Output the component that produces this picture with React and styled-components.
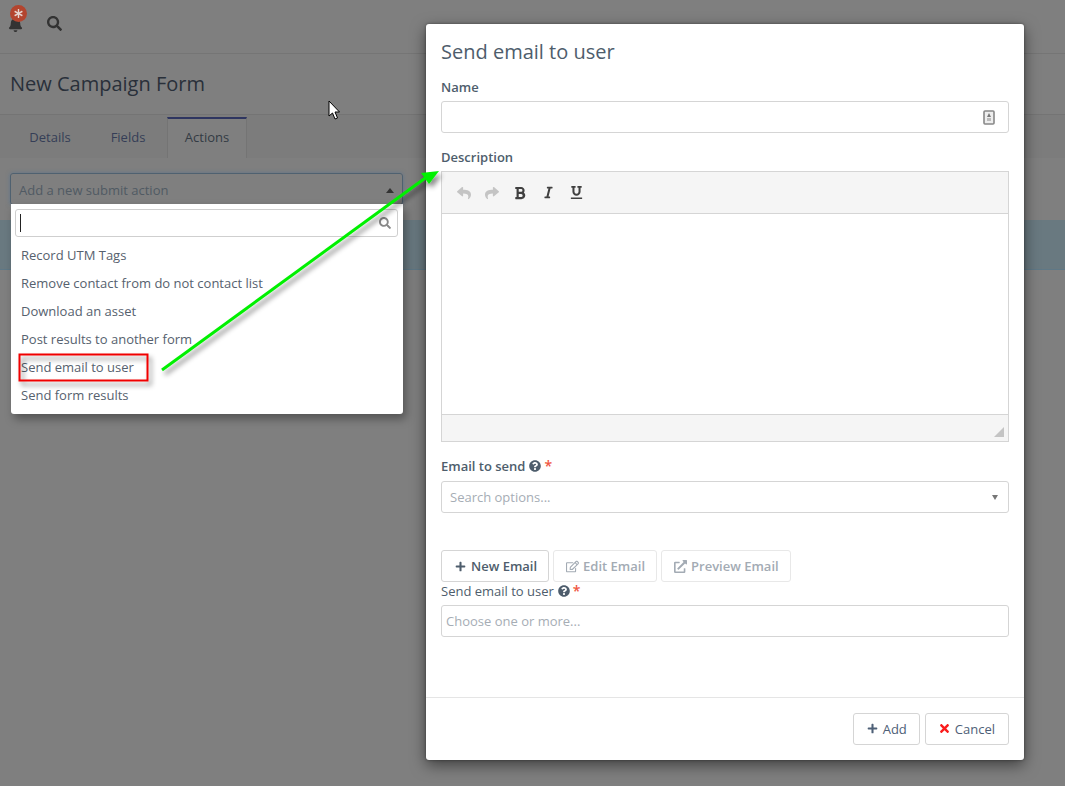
import React from 'react';
import styled, { createGlobalStyle } from 'styled-components';
import { FaBell, FaSearch, FaPlus, FaTimes, FaRegEdit, FaExternalLinkAlt, FaQuestionCircle, FaReply, FaShare, FaBold, FaItalic, FaUnderline, FaAsterisk } from 'react-icons/fa';

const Global = createGlobalStyle`
  html, body { margin: 0; padding: 0; }
  body { font-family: "Open Sans", "Liberation Sans", sans-serif; font-size: 13px; color: #4e5d6c; }
  * { box-sizing: border-box; }
`;

const Page = styled.div`
  position: relative; width: 1065px; height: 786px; overflow: hidden;
  background: #7f7f7f; display: flex; flex-direction: column;
`;
const Header = styled.header`
  height: 54px; background: #7f7f7f; border-bottom: 1px solid #757575;
  display: flex; align-items: center; gap: 24px; padding: 0 0 7px 8px; color: #333;
`;
const BellWrap = styled.div`position: relative; width: 15px; height: 15px; display: flex; margin-top: 2px;`;
const Badge = styled.span`
  position: absolute; left: 2px; top: -12px; width: 17px; height: 17px; border-radius: 50%;
  background: #b3452f; display: flex; align-items: center; justify-content: center; color: #e6d5d0;
`;
const TitleBar = styled.div`
  height: 61px; border-bottom: 1px solid #747474; display: flex; align-items: center; padding: 0 0 2px 10px;
`;
const Title = styled.h1`margin: 0; font-size: 20px; font-weight: 400; color: #29303a;`;
const TabBar = styled.nav`display: flex; height: 43px; padding: 2px 0 0 11px; background: #7c7c7c;`;
const Tab = styled.div`
  width: ${p => p.$w}px; display: flex; align-items: center; justify-content: center; padding-bottom: 3px;
  font-size: 13px; color: #353e57; border-top: 2px solid transparent;
  ${p => p.$active && `background:#7f7f7f; border-top-color:#2e3560; border-left:1px solid #747474; border-right:1px solid #747474; color:#333b44;`}
`;
const Content = styled.div`flex: 1; padding-top: 15px; background: #7f7f7f;`;
const SelectBox = styled.div`
  width: 393px; height: 32px; margin-left: 10px; border: 1px solid #4f6170; border-radius: 3px;
  display: flex; align-items: center; justify-content: space-between; padding: 2px 8px 0 8px; color: #505a63;
  box-shadow: 0 0 4px rgba(70,110,150,.5);
`;
const Caret = styled.span`
  width: 0; height: 0;
  border-left: ${p => p.$up ? 4 : 3.5}px solid transparent; border-right: ${p => p.$up ? 4 : 3.5}px solid transparent;
  ${p => p.$up ? 'border-bottom: 5px solid #333;' : 'border-top: 5px solid #777;'}
`;
const Alert = styled.div`height: 50px; margin-top: 15px; background: #697980; border-bottom: 1px solid #5f7886;`;

const Dropdown = styled.div`
  position: absolute; left: 11px; top: 204px; width: 392px; height: 210px; background: #fff;
  border-radius: 0 0 3px 3px; box-shadow: 3px 5px 10px rgba(0,0,0,.35); padding: 5px 5px 0 4px;
`;
const SearchField = styled.div`
  height: 28px; border: 1px solid #cfcfcf; border-radius: 3px; display: flex; align-items: center;
  justify-content: space-between; padding: 0 6px 0 4px; color: #888; margin-bottom: 4px;
`;
const TextCaret = styled.span`width: 1px; height: 18px; background: #222;`;
const Option = styled.div`height: 28px; line-height: 28px; padding-left: 6px; color: #56616e; font-size: 13px;`;

const Modal = styled.div`
  position: absolute; left: 426px; top: 24px; width: 598px; height: 736px; background: #fff;
  border-radius: 3px; box-shadow: 0 5px 15px rgba(0,0,0,.5), 0 0 3px rgba(0,0,0,.4); display: flex; flex-direction: column;
`;
const Body = styled.div`flex: 1; padding: 15px 15px 0;`;
const ModalTitle = styled.h2`margin: 0 0 14px; font-size: 20px; line-height: 25px; font-weight: 400; color: #4e5d6c;`;
const Label = styled.label`
  display: flex; align-items: center; gap: 4px; height: 18px; font-size: 13px; font-weight: 600;
  color: #4e5d6c; margin-bottom: ${p => p.$mb ?? 5}px;
`;
const PlainLabel = styled(Label)`font-weight: 500; color: #4e5d6c;`;
const Star = styled.span`color: #f0563f; font-size: 14px; font-weight: 600; margin: -1px 0 0 -1px;`;
const Input = styled.div`
  height: 32px; border: 1px solid #d5d5d5; border-radius: 3px; display: flex; align-items: center;
  justify-content: space-between; padding: 0 ${p => p.$pr ?? 10}px 0 ${p => p.$pl ?? 8}px; color: #a6adb5; font-size: 13px;
  margin-bottom: ${p => p.$mb ?? 0}px;
`;
const Editor = styled.div`border: 1px solid #d5d5d5; height: 271px; display: flex; flex-direction: column; margin-bottom: 15px;`;
const Toolbar = styled.div`
  height: 42px; background: #f5f5f5; border-bottom: 1px solid #d5d5d5; display: flex; align-items: center;
  gap: 14px; padding-left: 15px; font-size: 14px;
`;
const ToolIcon = styled.span`display: flex; width: 14px; justify-content: center; color: ${p => p.$off ? '#c4c4c4' : '#404040'};`;
const EditArea = styled.div`flex: 1; background: #fff;`;
const StatusBar = styled.div`
  height: 27px; background: #f5f5f5; border-top: 1px solid #d5d5d5; position: relative;
`;
const Grip = styled.span`
  position: absolute; right: 4px; bottom: 4px; width: 0; height: 0;
  border-left: 10px solid transparent; border-bottom: 10px solid #c4c4c4;
`;
const ButtonRow = styled.div`display: flex; gap: 4px; margin: 37px 0 0;`;
const Btn = styled.button`
  height: 32px; padding: 0 ${p => p.$off ? '11px 0 12px' : '11px 0 13px'}; background: #fff; border: 1px solid ${p => p.$off ? '#e8e8e8' : '#d5d5d5'}; border-radius: 3px;
  display: inline-flex; align-items: center; gap: ${p => p.$off ? 4 : 5}px; font: 600 13px "Open Sans", sans-serif;
  color: ${p => p.$off ? '#a3abb4' : '#4e5d6c'};
`;
const FootBtn = styled.button`
  height: 32px; padding: 0 ${p => p.$pr}px 0 ${p => p.$pl}px; background: #fff; border: 1px solid #d5d5d5; border-radius: 3px;
  display: inline-flex; align-items: center; gap: ${p => p.$gap}px; font: 400 13px "Open Sans", sans-serif; color: #4e6077;
`;
const Footer = styled.footer`
  height: 63px; border-top: 1px solid #e5e5e5; display: flex; align-items: center; justify-content: flex-end;
  gap: 5px; padding: 0 15px 1px;
`;
const Overlay = styled.svg`position: absolute; left: 0; top: 0; pointer-events: none;`;

const AddressIcon = () => (
  <svg width="12" height="15" viewBox="0 0 12 15"><rect x="1" y="1" width="10" height="13" rx="1" fill="#eee" stroke="#888" strokeWidth="1.6"/><path d="M6 3l2 4H4z" fill="#777"/><rect x="4" y="8" width="4" height="3" fill="#bbb"/></svg>
);

export default function App() {
  return (
    <Page>
      <Global />
      <Header>
        <BellWrap><FaBell size={15} /><Badge><FaAsterisk size={9} /></Badge></BellWrap>
        <FaSearch size={15} />
      </Header>
      <TitleBar><Title>New Campaign Form</Title></TitleBar>
      <TabBar>
        <Tab $w={78}>Details</Tab>
        <Tab $w={78}>Fields</Tab>
        <Tab $w={80} $active>Actions</Tab>
      </TabBar>
      <Content>
        <SelectBox>Add a new submit action<Caret $up /></SelectBox>
        <Alert />
      </Content>

      <Dropdown>
        <SearchField><TextCaret /><FaSearch size={12} /></SearchField>
        <Option>Record UTM Tags</Option>
        <Option>Remove contact from do not contact list</Option>
        <Option>Download an asset</Option>
        <Option>Post results to another form</Option>
        <Option>Send email to user</Option>
        <Option>Send form results</Option>
      </Dropdown>

      <Modal>
        <Body>
          <ModalTitle>Send email to user</ModalTitle>
          <Label>Name</Label>
          <Input $mb={15} $pr={13}><span /><AddressIcon /></Input>
          <Label>Description</Label>
          <Editor>
            <Toolbar>
              <ToolIcon $off><FaReply size={14} /></ToolIcon>
              <ToolIcon $off><FaShare size={14} /></ToolIcon>
              <ToolIcon><FaBold size={14} /></ToolIcon>
              <ToolIcon><FaItalic size={13} /></ToolIcon>
              <ToolIcon><FaUnderline size={13} /></ToolIcon>
            </Toolbar>
            <EditArea />
            <StatusBar><Grip /></StatusBar>
          </Editor>
          <Label $mb={6}>Email to send <FaQuestionCircle size={12} /><Star>*</Star></Label>
          <Input>Search options...<Caret /></Input>
          <ButtonRow>
            <Btn><FaPlus size={11} /> New Email</Btn>
            <Btn $off><FaRegEdit size={13} /> Edit Email</Btn>
            <Btn $off><FaExternalLinkAlt size={13} /> Preview Email</Btn>
          </ButtonRow>
          <PlainLabel $mb={5}>Send email to user <FaQuestionCircle size={12} /><Star>*</Star></PlainLabel>
          <Input $pl={4}>Choose one or more...</Input>
        </Body>
        <Footer>
          <FootBtn $pl={13} $pr={12} $gap={5}><FaPlus size={11} /> Add</FootBtn>
          <FootBtn $pl={12} $pr={13} $gap={4}><FaTimes size={13} color="#fa1c1c" /> Cancel</FootBtn>
        </Footer>
      </Modal>

      <Overlay width="1065" height="786" viewBox="0 0 1065 786">
        <defs>
          <filter id="sh" x="-20%" y="-20%" width="140%" height="140%">
            <feDropShadow dx="3" dy="4" stdDeviation="2.5" floodColor="#000" floodOpacity=".45" />
          </filter>
        </defs>
        <g filter="url(#sh)">
          <rect x="19.5" y="354.5" width="128" height="26" fill="none" stroke="#f00000" strokeWidth="2" />
          <line x1="162" y1="370" x2="428" y2="176" stroke="#00f000" strokeWidth="3" />
          <path d="M439 171l-18 2 8 11z" fill="#00f000" />
        </g>
        <path d="M329 101v15l3.5-3 2.5 6 2.5-1-2.5-6h4.5z" fill="#fff" stroke="#000" strokeWidth="1" />
      </Overlay>
    </Page>
  );
}
